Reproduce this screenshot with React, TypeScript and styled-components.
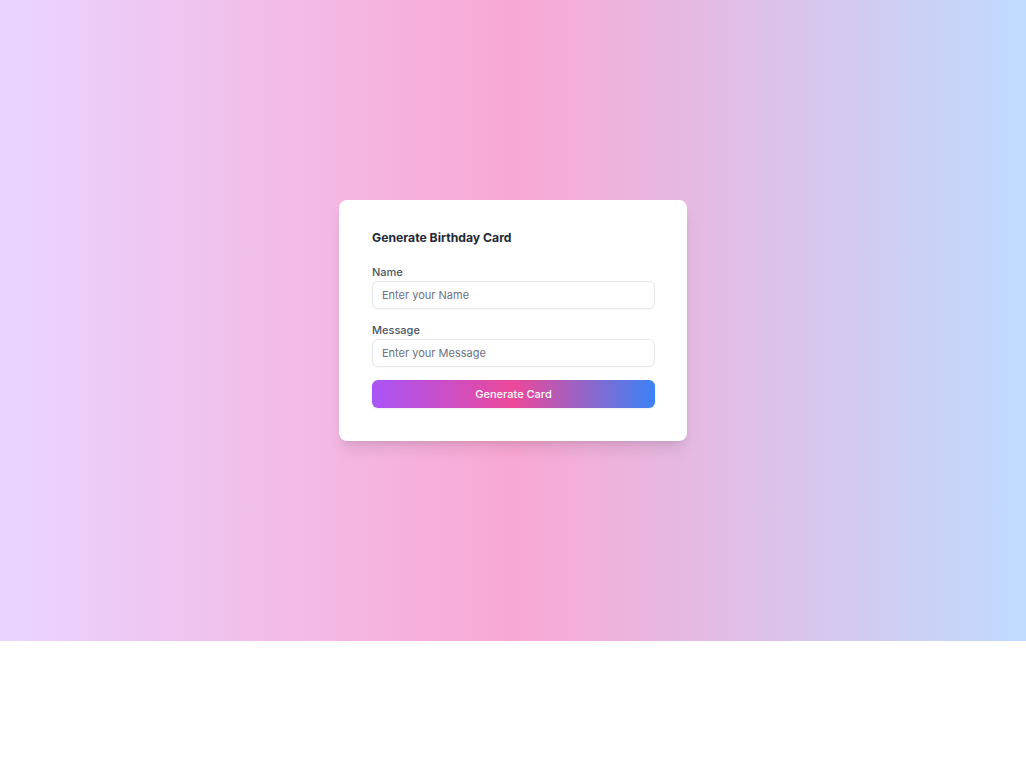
import React from "react";
import styled, { createGlobalStyle } from "styled-components";

const Global = createGlobalStyle`
  html, body { margin: 0; padding: 0; background: #ffffff; }
  body { font-family: Inter, "Noto Sans", sans-serif; -webkit-font-smoothing: antialiased; }
  * { box-sizing: border-box; }
`;

const Screen = styled.div`
  height: 641px;
  display: flex;
  align-items: center;
  justify-content: center;
  background: linear-gradient(to right, #e9d5ff, #f9a8d4, #bfdbfe);
`;

const Card = styled.form`
  width: 348px;
  background: #ffffff;
  border-radius: 8px;
  padding: 30px 32px 33px 33px;
  box-shadow: 0 10px 15px -3px rgba(0, 0, 0, 0.1), 0 4px 6px -4px rgba(0, 0, 0, 0.1);
  display: flex;
  flex-direction: column;
`;

const Title = styled.h2`
  margin: 0 0 19px;
  font-size: 12.2px;
  line-height: 16px;
  font-weight: 700;
  color: #1f2937;
`;

const Field = styled.div`
  display: flex;
  flex-direction: column;
  margin-bottom: ${(p: { $gap: number }) => p.$gap}px;
`;

const Label = styled.label`
  font-size: 11px;
  line-height: 14px;
  font-weight: 500;
  color: #4b5563;
  margin-bottom: 2px;
`;

const Input = styled.input`
  height: 28px;
  width: 100%;
  border: 1px solid #e5e7eb;
  border-radius: 6px;
  padding: 0 9px;
  font-family: inherit;
  font-size: 11px;
  color: #111827;
  background: #ffffff;
  outline: none;
  box-shadow: 0 1px 2px rgba(0, 0, 0, 0.03);
  &::placeholder { color: #6b7280; }
`;

const Button = styled.button`
  height: 28px;
  width: 100%;
  border: none;
  border-radius: 6px;
  font-family: inherit;
  font-size: 11px;
  font-weight: 500;
  color: #ffffff;
  cursor: pointer;
  background: linear-gradient(to right, #a855f7, #ec4899, #3b82f6);
  box-shadow: 0 1px 2px rgba(0, 0, 0, 0.08);
`;

export default function App() {
  return (
    <>
      <Global />
      <Screen>
        <Card onSubmit={(e) => e.preventDefault()}>
          <Title>Generate Birthday Card</Title>
          <Field $gap={14}>
            <Label htmlFor="name">Name</Label>
            <Input id="name" placeholder="Enter your Name" />
          </Field>
          <Field $gap={13}>
            <Label htmlFor="message">Message</Label>
            <Input id="message" placeholder="Enter your Message" />
          </Field>
          <Button type="submit">Generate Card</Button>
        </Card>
      </Screen>
    </>
  );
}
